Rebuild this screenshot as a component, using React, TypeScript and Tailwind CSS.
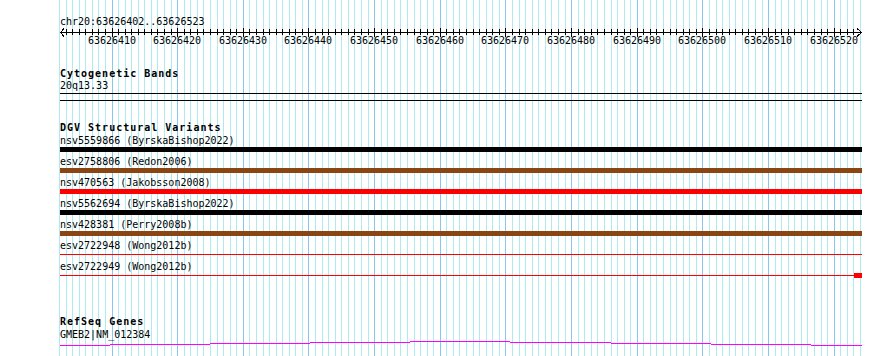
import React from "react";

// 122 bases in view, one grid column per base
const START = 63626402;
const COLS = 123;
const colX = (i: number) => Math.floor(112 + (i - 8) * 6.566);
const isMajor = (i: number) => (i - 8) % 10 === 0;

const variants = [
  { label: "nsv5559866 (ByrskaBishop2022)", kind: "bar", color: "bg-black" },
  { label: "esv2758806 (Redon2006)", kind: "bar", color: "bg-[#8b4513]" },
  { label: "nsv470563 (Jakobsson2008)", kind: "bar", color: "bg-[#ff0000]" },
  { label: "nsv5562694 (ByrskaBishop2022)", kind: "bar", color: "bg-black" },
  { label: "nsv428381 (Perry2008b)", kind: "bar", color: "bg-[#8b4513]" },
  { label: "esv2722948 (Wong2012b)", kind: "line", color: "bg-[#ff0000]" },
  { label: "esv2722949 (Wong2012b)", kind: "end", color: "bg-[#ff0000]" },
];

// intron line steps, absolute x / y
const geneSteps: [number, number, number][] = [
  [60, 110, 345],
  [110, 210, 344],
  [210, 310, 343],
  [310, 410, 342],
  [410, 510, 341],
  [510, 611, 342],
  [611, 711, 343],
  [711, 811, 344],
  [811, 862, 345],
];

function GridLines() {
  return (
    <svg className="absolute inset-0 pointer-events-none" width={890} height={356}>
      {Array.from({ length: COLS }, (_, i) => (
        <rect
          key={i}
          x={colX(i)}
          y={0}
          width={1}
          height={356}
          fill={isMajor(i) ? "#88c8ee" : "#aeeaf0"}
        />
      ))}
    </svg>
  );
}

function Ruler() {
  const ticks = Array.from({ length: COLS }, (_, i) => i).filter((i) => colX(i) > 62 && colX(i) < 859);
  return (
    <svg className="block" width={802} height={20} shapeRendering="crispEdges">
      <rect x={0} y={5} width={802} height={1} fill="#000" />
      {ticks.map((i) => (
        <rect
          key={i}
          x={colX(i) - 60}
          y={isMajor(i) ? 1 : 2}
          width={1}
          height={isMajor(i) ? 9 : 6}
          fill="#000"
        />
      ))}
      <polyline points="4,1.5 0.5,5.5 4,9.5" fill="none" stroke="#000" strokeWidth={1} />
      <polyline points="797,1.5 801.5,5.5 797,9.5" fill="none" stroke="#000" strokeWidth={1} />
      {ticks
        .filter((i) => isMajor(i))
        .map((i) => (
          <text
            key={i}
            x={colX(i) - 60}
            y={17}
            textAnchor="middle"
            fontSize={10}
            fontFamily="'DejaVu Sans Mono', 'Liberation Mono', monospace"
            fill="#000"
          >
            {START + i}
          </text>
        ))}
    </svg>
  );
}

function TrackTitle({ children }: { children: React.ReactNode }) {
  return <div className="h-[11px] leading-[11px] font-bold tracking-[1px] whitespace-nowrap">{children}</div>;
}

function VariantRow({ label, kind, color }: { label: string; kind: string; color: string }) {
  return (
    <div className="h-[21px]">
      <div className="h-[11px] leading-[11px] whitespace-nowrap">{label}</div>
      {kind === "bar" && <div className={`mt-px h-[5px] ${color}`} />}
      {kind === "line" && (
        <div className="mt-px h-[5px] flex items-center">
          <div className={`flex-1 h-px ${color}`} />
        </div>
      )}
      {kind === "end" && (
        <div className="mt-px h-[5px] flex items-center">
          <div className={`flex-1 h-px ${color}`} />
          <div className={`w-[8px] h-[5px] ${color}`} />
        </div>
      )}
    </div>
  );
}

export default function App() {
  return (
    <div className="relative w-[890px] h-[356px] bg-white overflow-hidden text-black text-[10px] font-['DejaVu_Sans_Mono','Liberation_Mono',monospace]">
      <GridLines />
      <div className="relative pl-[60px] pt-[16px] w-[862px]">
        <div className="h-[11px] leading-[11px]">chr20:63626402..63626523</div>
        <Ruler />

        <div className="mt-[21px]">
          <TrackTitle>Cytogenetic Bands</TrackTitle>
          <div className="mt-px h-[11px] leading-[11px]">20q13.33</div>
          <div className="mt-[2px] h-[8px] border-y border-black" />
        </div>

        <div className="mt-[21px]">
          <TrackTitle>DGV Structural Variants</TrackTitle>
          <div className="mt-[2px]">
            {variants.map((v) => (
              <VariantRow key={v.label} {...v} />
            ))}
          </div>
        </div>

        <div className="mt-[34px]">
          <TrackTitle>RefSeq Genes</TrackTitle>
          <div className="mt-[2px] h-[11px] leading-[11px]">GMEB2|NM_012384</div>
          <svg className="block" width={802} height={8} shapeRendering="crispEdges">
            {geneSteps.map(([x1, x2, y]) => (
              <rect key={x1} x={x1 - 60} y={y - 340} width={x2 - x1} height={1} fill="#ff00ff" />
            ))}
          </svg>
        </div>
      </div>
    </div>
  );
}
